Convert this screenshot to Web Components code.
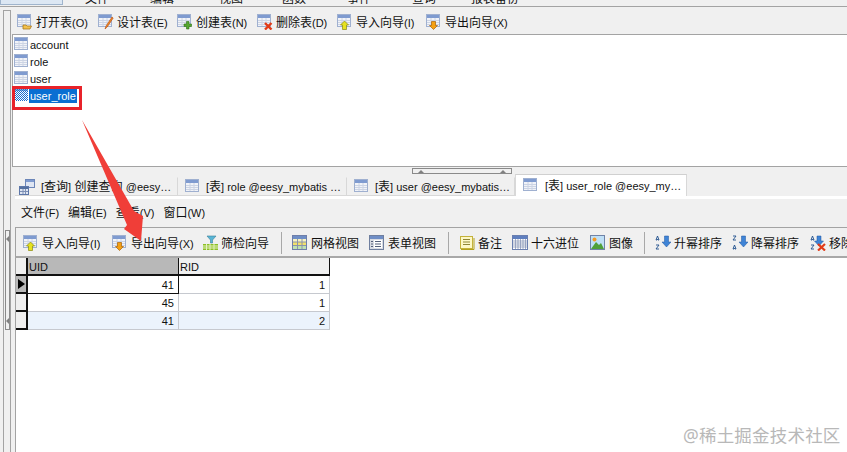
<!DOCTYPE html>
<html>
<head>
<meta charset="utf-8">
<style>
  html, body { margin: 0; padding: 0; background: #fff; }
  body { font: 12px/16px "Liberation Sans", "Noto Sans CJK SC", sans-serif; color: #111; }
</style>
</head>
<body>
<nv-app></nv-app>
<script>
// табличная иконка + наложения, все рисуем в svg 16x16
const tableBase = () => `
  <rect x=".5" y=".5" width="13" height="12" fill="#f1f3f8" stroke="#9fb0d0"/>
  <rect x="1" y="1" width="12" height="3" fill="#7f9bd0"/>
  <path d="M1 6.500h12M1 8.500h12M1 10.500h12M5 4v8M9 4v8" stroke="#ccd4e4" fill="none"/>`;

const ICONS = {
  table: tableBase(),
  selected: `<defs><pattern id="d" width="2" height="2" patternUnits="userSpaceOnUse"><rect width="2" height="2" fill="#fff"/><rect width="1" height="1" fill="#1a6fd0"/><rect x="1" y="1" width="1" height="1" fill="#1a6fd0"/></pattern></defs><rect width="14" height="13" fill="url(#d)"/><rect width="14" height="3" fill="#2f74c8" opacity=".6"/>`,
  open: tableBase() + `<path d="M6 15v-4h3l1 1h4.500l-1.500 3z" fill="#f2c14e" stroke="#a9791d" stroke-width=".8"/>`,
  design: tableBase() + `<path d="M7 15l1-3 6-9 1.200 1-6 9z" fill="#f08a24" stroke="#b3480f" stroke-width=".6"/>`,
  create: tableBase() + `<path d="M9.500 7.500H12V10h2.500v2.500H12V15H9.500v-2.500H7V10h2.500z" fill="#55a630" stroke="#2f7317" stroke-width=".6"/>`,
  remove: tableBase() + `<path d="M8 9l6.500 6.500M14.500 9L8 15.500" stroke="#e23a17" stroke-width="2.400" fill="none"/>`,
  import: tableBase() + `<path d="M7.500 7l4 4h-2v4.500h-4V11h-2z" fill="#e6e21f" stroke="#8a8a10" stroke-width=".7"/>`,
  export: tableBase() + `<path d="M5.500 7.500h4v4h2l-4 4-4-4h2z" fill="#f5a011" stroke="#a8610a" stroke-width=".7"/>`,
  query: `<rect x="6.500" y=".5" width="9" height="8" fill="#dfe6f3" stroke="#6c86b8"/><rect x="7" y="1" width="8" height="2" fill="#7f9bd0"/><rect x=".5" y="7.500" width="9" height="8" fill="#dfe6f3" stroke="#5d77aa"/><rect x="1" y="8" width="8" height="2" fill="#54709f"/><path d="M1 12.500h8M4 10v5M6.500 10v5" stroke="#7e90b5"/>`,
  filter: `<path d="M5 1h9l-3.500 4v3h-2V5z" fill="#57b5d6" stroke="#3c8099" stroke-width=".6"/><path d="M1 9h15v6H1z" fill="#8cbf26"/><path d="M1 11h15M1 13h15M4.500 9v6M8 9v6M12 9v6" stroke="#e6f2c0"/>`,
  gridview: `<rect x=".5" y=".5" width="14" height="14" fill="#f8f3c2" stroke="#6f7faa"/><rect x="1" y="1" width="13" height="3" fill="#6f8ec6"/><rect x="1" y="7" width="13" height="3" fill="#f3e16a"/><rect x="1" y="11" width="13" height="3" fill="#bfe2b0"/><path d="M5.500 4v10M10 4v10M1 7h13M1 10.500h13" stroke="#8a94ad" fill="none"/>`,
  formview: `<rect x=".5" y=".5" width="14" height="14" fill="#d9dce3" stroke="#6f7f9f"/><rect x="1" y="1" width="13" height="3" fill="#6f8ec6"/><rect x="5" y="5" width="8" height="8" fill="#fff"/><path d="M2 6.500h2M2 9h2M2 11.500h2M6 6.500h6M6 9h6M6 11.500h6" stroke="#55607a" fill="none"/>`,
  note: `<rect x="1.500" y="1.500" width="12" height="12" fill="#fdf8c6" stroke="#c4b23a"/><path d="M4 4.500h7M4 7h7M4 9.500h7" stroke="#8f8636" fill="none"/><path d="M2 14.500h13V3" stroke="#b3a11a" fill="none"/>`,
  hex: `<rect x=".5" y=".5" width="15" height="14" fill="#fff" stroke="#6a7fb0"/><rect x="1" y="1" width="14" height="3" fill="#5f7fbf"/><path d="M1 6h14M1 8h14M1 10h14M1 12h14M3.500 4v10M6 4v10M8.500 4v10M11 4v10M13.500 4v10" stroke="#7f8db0" stroke-width=".7" fill="none"/>`,
  image: `<rect x=".5" y=".5" width="14" height="14" fill="#bfe0f7" stroke="#6f83a8"/><circle cx="4.500" cy="4.500" r="2" fill="#f59a23"/><path d="M1 14l5-7 3 3 2-2 3 6z" fill="#4fa03a"/>`,
  asc: `<path d="M9.500 1h4v6h2.500l-4.500 5-4.500-5h2.500z" fill="#3f84d6" stroke="#1f56a0" stroke-width=".5"/><path d="M2.500 1L1 5h1l.5-1 .5 1h1zM1 10h3l-3 4h3" stroke="#1f4f8c" fill="none" stroke-width=".9"/>`,
  desc: `<path d="M9.500 1h4v6h2.500l-4.500 5-4.500-5h2.500z" fill="#3f84d6" stroke="#1f56a0" stroke-width=".5"/><path d="M1 1h3l-3 4h3M2.500 10L1 14h1l.5-1 .5 1h1z" stroke="#1f4f8c" fill="none" stroke-width=".9"/>`,
  clear: `<path d="M7 1h4v5h2.500l-4.500 5-4.500-5H7z" fill="#3f84d6" stroke="#1f56a0" stroke-width=".5"/><path d="M2.500 1L1 5h1l.5-1 .5 1h1zM1 10h3l-3 4h3" stroke="#1f4f8c" fill="none" stroke-width=".9"/><path d="M8 9l7 6.500M15 9l-7 6.500" stroke="#e23a17" stroke-width="2.200"/>`
};

class NvIcon extends HTMLElement {
  connectedCallback() {
    const name = this.getAttribute('name') || 'table';
    this.attachShadow({ mode: 'open' }).innerHTML = `
      <style>:host { display: block; width: 16px; height: 16px; flex: none; } svg { display: block; }</style>
      <svg width="16" height="16" viewBox="0 0 16 16">${ICONS[name]}</svg>`;
  }
}

// мелкий латинский текст рядом с cjk 12px
class NvK extends HTMLElement {
  connectedCallback() {
    this.attachShadow({ mode: 'open' }).innerHTML = `<style>:host { display: inline; font-size: 11px; }</style><slot></slot>`;
  }
}

class NvTool extends HTMLElement {
  connectedCallback() {
    const icon = this.getAttribute('icon');
    const after = this.getAttribute('after') || 11;
    const w = this.getAttribute('w');
    this.attachShadow({ mode: 'open' }).innerHTML = `
      <style>
        :host { display: flex; align-items: center; gap: 3px; flex: none; margin-right: ${after}px; white-space: nowrap; font-size: 12px; }
        span { display: block; padding-top: 2px; ${w ? `width: ${w}px;` : ''} }
      </style>
      <nv-icon name="${icon}"></nv-icon><span><slot></slot></span>`;
  }
}

class NvBar extends HTMLElement {
  connectedCallback() {
    this.attachShadow({ mode: 'open' }).innerHTML = `
      <style>
        :host { display: flex; align-items: center; box-sizing: border-box; background: #f0f0f0; overflow: hidden; }
      </style>
      <slot></slot>`;
  }
}

class NvSep extends HTMLElement {
  connectedCallback() {
    this.attachShadow({ mode: 'open' }).innerHTML = `
      <style>:host { display: block; flex: none; width: 1px; height: 22px; background: #a8a8a8; margin-right: 10px; }</style>`;
  }
}

class NvTab extends HTMLElement {
  connectedCallback() {
    const icon = this.getAttribute('icon') || 'table';
    const on = this.hasAttribute('active');
    const w = this.getAttribute('width');
    const pad = this.getAttribute('pad') || 7;
    const gap = this.getAttribute('gap') || 5;
    this.attachShadow({ mode: 'open' }).innerHTML = `
      <style>
        :host {
          display: flex; align-items: center; gap: ${gap}px; box-sizing: border-box; flex: none;
          width: ${w}px; height: ${on ? 22 : 19}px; padding: 0 0 0 ${pad}px;
          background: ${on ? '#fff' : '#f0f0f0'};
          border: 1px solid #d8d8d8; border-left-width: ${on ? 1 : 0}px; border-bottom-width: ${on ? 0 : 1}px;
          ${on ? 'border-top-color:#d0d0d0;' : 'border-top-color:#f0f0f0;'}
          font-size: 12px; white-space: nowrap;
        }
        span { display: block; }
      </style>
      <nv-icon name="${icon}"></nv-icon><span><slot></slot></span>`;
  }
}

class NvRow extends HTMLElement {
  connectedCallback() {
    const on = this.hasAttribute('selected');
    this.attachShadow({ mode: 'open' }).innerHTML = `
      <style>
        :host { display: flex; align-items: flex-start; height: 17px; font-size: 11px; }
        span { margin-left: -1px; padding: 1px 1px 0; line-height: 14px; ${on ? 'background:#0a6fd2;color:#fff;' : ''} }
      </style>
      <nv-icon name="${on ? 'selected' : 'table'}"></nv-icon><span><slot></slot></span>`;
  }
}

class NvGrid extends HTMLElement {
  connectedCallback() {
    const rows = [['41', '1'], ['45', '1'], ['41', '2']];
    const body = rows.map((r, i) => `
      <div class="ind ${i === 0 ? 'cur' : ''}">${i === 0 ? '<i></i>' : ''}</div>
      <div class="c a ${i === 0 ? 'cur' : ''} ${i === 2 ? 'alt' : ''}">${r[0]}</div>
      <div class="c ${i === 2 ? 'alt' : ''}">${r[1]}</div>`).join('');
    this.attachShadow({ mode: 'open' }).innerHTML = `
      <style>
        :host { display: grid; grid-template-columns: 12px 151px 151px; grid-auto-rows: 18px; width: 314px; font-size: 11px; line-height: 16px; }
        .ind { box-sizing: border-box; background: #f0f0f0; border-right: 2px solid #111; border-bottom: 2px solid #111; position: relative; }
        .ind.cur { background: #b8b8b8; }
        .ind i { position: absolute; left: 2px; top: 3px; border-left: 7px solid #000; border-top: 5px solid transparent; border-bottom: 5px solid transparent; }
        .h { box-sizing: border-box; padding: 1px 0 0 1px; background: #f0f0f0; border-bottom: 2px solid #111; border-right: 1px solid #111; }
        .h.s { background: #b8b8b8; }
        .c { box-sizing: border-box; text-align: right; padding: 1px 4px 0 0; border-right: 1px solid #c6c9cf; border-bottom: 1px solid #c6c9cf; background: #fff; }
        .c.a.cur { border-bottom: 1px solid #111; border-right: 1px solid #111; }
        .c.alt { background: #ebf3fc; }
      </style>
      <div class="ind"></div><div class="h s">UID</div><div class="h">RID</div>${body}`;
  }
}

class NvApp extends HTMLElement {
  connectedCallback() {
    this.attachShadow({ mode: 'open' }).innerHTML = `
      <style>
        :host { display: flex; flex-direction: column; width: 847px; height: 452px; position: relative; overflow: hidden; background: #f0f0f0; }
        .strip { height: 7px; flex: none; box-sizing: border-box; border-bottom: 1px solid #a3a3a3; display: flex; overflow: hidden; }
        .strip .home { width: 63px; height: 5px; flex: none; box-sizing: border-box; background: #dce7f3; border: 1px solid #9fb4cc; border-top: 0; margin-right: 22px; }
        .strip span { flex: none; line-height: 12px; margin-top: -7px; }
        .strip .g { margin-right: 41px; }
        .body { flex: 1; display: flex; min-height: 0; }
        .side { width: 12px; flex: none; box-sizing: border-box; padding: 3px 1px 0 3px; }
        .side .rail { height: 100%; box-sizing: border-box; border-left: 1px solid #a3a3a3; border-top: 1px solid #a3a3a3; border-right: 1px solid #a3a3a3; padding: 219px 0 0 1px; }
        .side .sash { height: 100px; width: 5px; box-sizing: border-box; border: 1px solid #8a8a8a; display: flex; flex-direction: column; justify-content: space-between; align-items: center; padding: 5px 0; background: #f0f0f0; }
        .side .sash i { display: block; border-right: 3px solid #808080; border-top: 3px solid transparent; border-bottom: 3px solid transparent; }
        .main { flex: 1; min-width: 0; display: flex; flex-direction: column; }
        .tb1 { height: 28px; flex: none; padding: 2px 0 0 5px; border-bottom: 1px solid #a3a3a3; }
        .list { height: 132px; flex: none; box-sizing: border-box; background: #fff; border-left: 1px solid #a3a3a3; border-bottom: 1px solid #a3a3a3; padding: 2px 0 0 1px; position: relative; }
        .mark { position: absolute; left: -1px; top: 51px; width: 70px; height: 24px; box-sizing: border-box; border: 3px solid #e8232a; }
        .hsash { height: 7px; flex: none; display: flex; justify-content: center; padding: 1px 0 0 0; box-sizing: border-box; }
        .hsash div { width: 100px; height: 6px; margin-left: 65px; box-sizing: border-box; border: 1px solid #8a8a8a; display: flex; justify-content: space-between; padding: 0 5px; }
        .hsash i { display: block; border-bottom: 3px solid #808080; border-left: 3px solid transparent; border-right: 3px solid transparent; }
        .tabs { height: 22px; flex: none; display: flex; align-items: flex-end; padding-left: 3px; }
        .gutter { height: 3px; flex: none; background: #fff; margin-left: 3px; }
        .menu { height: 29px; flex: none; margin-left: 3px; padding-left: 6px; gap: 9px; border-bottom: 1px solid #a3a3a3; }
        .tb2 { height: 30px; flex: none; margin-left: 3px; padding: 1px 0 0 7px; border-left: 1px solid #a3a3a3; border-bottom: 2px solid #a8a8a8; }
        .sheet { flex: 1; margin-left: 3px; background: #fff; border-left: 1px solid #a3a3a3; }
        .arrow { position: absolute; left: 0; top: 0; pointer-events: none; }
        .mark-w { position: absolute; left: 683px; top: 423px; font: 17.500px/24px "Noto Sans", "Noto Sans CJK SC", sans-serif; letter-spacing: .2px; color: #b8b8b8; white-space: nowrap; }
      </style>
      <div class="strip">
        <div class="home"></div>
        <span class="g">文件</span><span class="g" style="margin-right:45px">编辑</span><span class="g" style="margin-right:39px">视图</span><span class="g">函数</span><span class="g">事件</span><span class="g" style="margin-right:35px">查询</span><span>报表备份</span>
      </div>
      <div class="body">
        <div class="side"><div class="rail"><div class="sash"><i></i><i></i></div></div></div>
        <div class="main">
          <nv-bar class="tb1">
            <nv-tool icon="open" w="51">打开表<nv-k>(O)</nv-k></nv-tool>
            <nv-tool icon="design" w="49">设计表<nv-k>(E)</nv-k></nv-tool>
            <nv-tool icon="create" w="50">创建表<nv-k>(N)</nv-k></nv-tool>
            <nv-tool icon="remove" w="50">删除表<nv-k>(D)</nv-k></nv-tool>
            <nv-tool icon="import" w="59">导入向导<nv-k>(I)</nv-k></nv-tool>
            <nv-tool icon="export" w="62">导出向导<nv-k>(X)</nv-k></nv-tool>
          </nv-bar>
          <div class="list">
            <nv-row>account</nv-row>
            <nv-row>role</nv-row>
            <nv-row>user</nv-row>
            <nv-row selected>user_role</nv-row>
            <div class="mark"></div>
          </div>
          <div class="hsash"><div><i></i><i></i></div></div>
          <div class="tabs">
            <nv-tab icon="query" width="163" pad="4" gap="6"><nv-k>[</nv-k>查询<nv-k>]</nv-k> 创建查询 <nv-k>@eesy…</nv-k></nv-tab>
            <nv-tab width="169"><nv-k>[</nv-k>表<nv-k>] role @eesy_mybatis …</nv-k></nv-tab>
            <nv-tab width="168"><nv-k>[</nv-k>表<nv-k>] user @eesy_mybatis…</nv-k></nv-tab>
            <nv-tab width="172" pad="7" gap="6" active><nv-k>[</nv-k>表<nv-k>] user_role @eesy_my…</nv-k></nv-tab>
          </div>
          <div class="gutter"></div>
          <nv-bar class="menu"><span>文件<nv-k>(F)</nv-k></span><span>编辑<nv-k>(E)</nv-k></span><span>查看<nv-k>(V)</nv-k></span><span>窗口<nv-k>(W)</nv-k></span></nv-bar>
          <nv-bar class="tb2">
            <nv-tool icon="import" w="60" after="10">导入向导<nv-k>(I)</nv-k></nv-tool>
            <nv-tool icon="export" w="61" after="10">导出向导<nv-k>(X)</nv-k></nv-tool>
            <nv-tool icon="filter" w="48" after="12">筛检向导</nv-tool>
            <nv-sep></nv-sep>
            <nv-tool icon="gridview" w="48" after="10">网格视图</nv-tool>
            <nv-tool icon="formview" w="48" after="12">表单视图</nv-tool>
            <nv-sep></nv-sep>
            <nv-tool icon="note" w="24" after="10">备注</nv-tool>
            <nv-tool icon="hex" w="48" after="11">十六进位</nv-tool>
            <nv-tool icon="image" w="24" after="11">图像</nv-tool>
            <nv-sep></nv-sep>
            <nv-tool icon="asc" w="48" after="10">升幂排序</nv-tool>
            <nv-tool icon="desc" w="48" after="11">降幂排序</nv-tool>
            <nv-tool icon="clear">移除排序</nv-tool>
          </nv-bar>
          <div class="sheet"><nv-grid></nv-grid></div>
        </div>
      </div>
      <svg class="arrow" width="847" height="452"><path d="M82 120 L134 211 L143 216 L141 241 L124 229 L127 225 Z" fill="#f03e38"/></svg>
      <div class="mark-w">@稀土掘金技术社区</div>`;
  }
}

customElements.define('nv-icon', NvIcon);
customElements.define('nv-k', NvK);
customElements.define('nv-tool', NvTool);
customElements.define('nv-bar', NvBar);
customElements.define('nv-sep', NvSep);
customElements.define('nv-tab', NvTab);
customElements.define('nv-row', NvRow);
customElements.define('nv-grid', NvGrid);
customElements.define('nv-app', NvApp);
</script>
</body>
</html>
